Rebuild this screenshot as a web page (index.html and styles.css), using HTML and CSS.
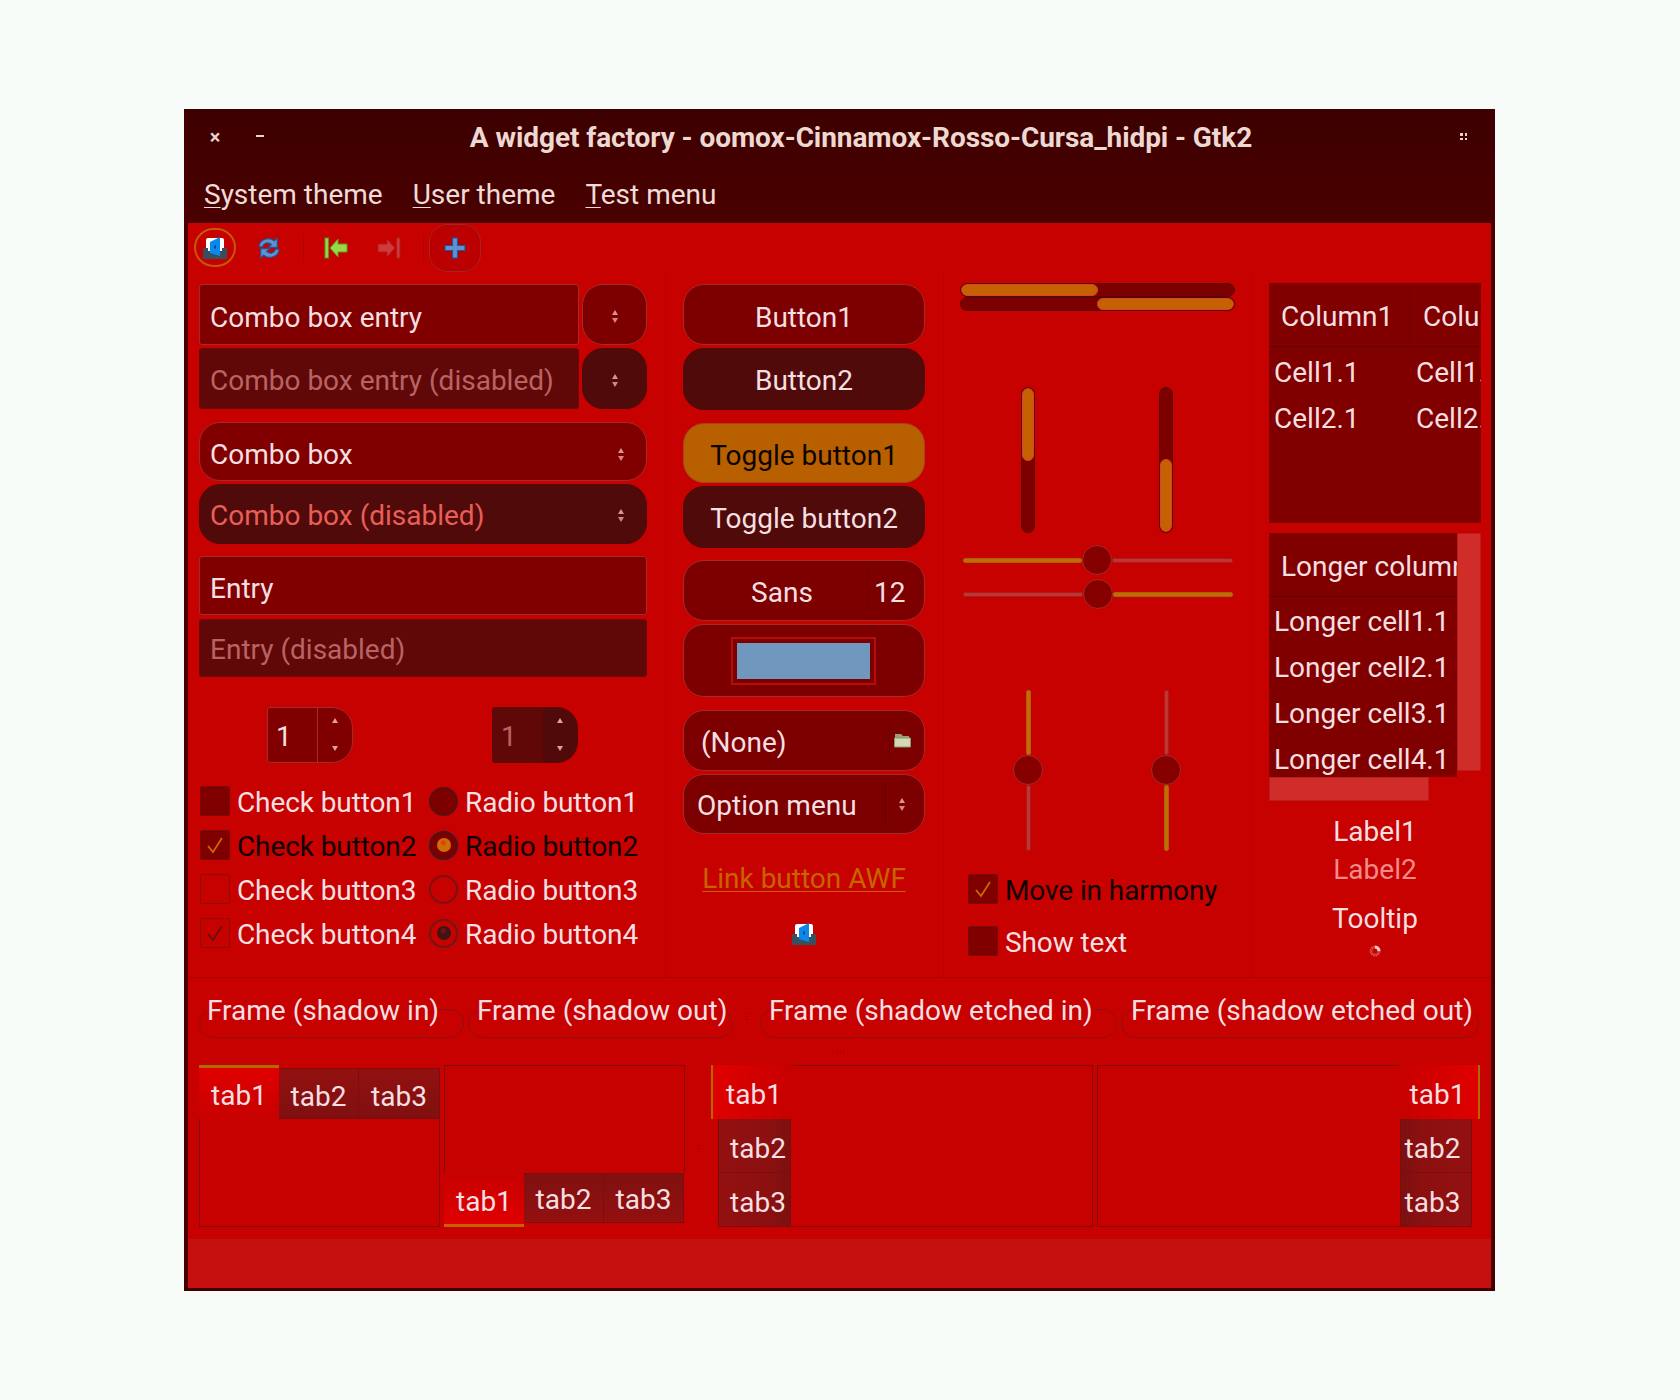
FILE: index.html
```html
<!DOCTYPE html>
<html lang="en">
  <head>
    <meta charset="UTF-8" />
    <title>A widget factory</title>
    <link rel="stylesheet" href="styles.css">
  </head>
  <body>
    <div class="window">
      <div class="titlebar">
        <div class="title-left">
          <span class="wm-close">×</span>
          <span class="wm-min"></span>
        </div>
        <div class="title-text">A widget factory - oomox-Cinnamox-Rosso-Cursa_hidpi - Gtk2</div>
        <div class="title-right"><span class="wm-max"></span></div>
      </div>
      <div class="menubar">
        <span><u>S</u>ystem theme</span>
        <span><u>U</u>ser theme</span>
        <span><u>T</u>est menu</span>
      </div>

      <div class="content">
        <div class="toolbar">
          <div class="tool tool-focus">
            <svg width="24" height="24" viewBox="0 0 24 24">
              <rect x="3" y="2" width="18" height="13" rx="2" fill="#fff" />
              <path d="M0 12h5v3h14v-3h5v10a1 1 0 0 1-1 1H1a1 1 0 0 1-1-1z" fill="#37505f" />
              <path d="M7 6l10-5v19l-10-3z" fill="#0b88ec" />
              <path d="M11 10l2-1v4l-2-1z" fill="#0a4f96" />
            </svg>
          </div>
          <div class="tool tool-refresh">
            <svg width="26" height="26" viewBox="0 0 22 22">
              <path d="M2.500 10C3 3.500 11 1 15.500 5L18 2.500V10.500H10.500L13 8C10 5.500 6.500 6.500 5.500 10z" fill="#5b93d6" stroke="#23558f" stroke-width="1" />
              <path d="M19.500 12C19 18.500 11 21 6.500 17L4 19.500V11.500H11.500L9 14C12 16.500 15.500 15.500 16.500 12z" fill="#5b93d6" stroke="#23558f" stroke-width="1" />
            </svg>
          </div>
          <div class="tool-sep"></div>
          <div class="tool tool-first">
            <svg width="24" height="22" viewBox="0 0 24 22">
              <rect x="1" y="1" width="3.400" height="20" fill="#9ad64c" stroke="#5c9c12" />
              <path d="M6 11l8-9v5h9v8h-9v5z" fill="#9ad64c" stroke="#5c9c12" />
            </svg>
          </div>
          <div class="tool tool-last">
            <svg width="24" height="22" viewBox="0 0 24 22">
              <rect x="19.600" y="1" width="3.400" height="20" fill="#cf3a3a" stroke="#ae1c1c" />
              <path d="M18 11l-8-9v5H1v8h9v5z" fill="#cf3a3a" stroke="#ae1c1c" />
            </svg>
          </div>
          <div class="tool-sep tool-sep-2"></div>
          <div class="tool tool-add">
            <svg width="22" height="22" viewBox="0 0 22 22">
              <path d="M8.500 1h5v7.500h7.500v5h-7.500v7.500h-5v-7.500H1v-5h7.500z" fill="#5b93d6" stroke="#23558f" stroke-width="1.200" />
            </svg>
          </div>
        </div>

        <div class="columns">
          <div class="col col-1">
            <div class="combo-entry">
              <div class="entry grow">Combo box entry</div>
              <div class="pill-btn"><span class="updown"></span></div>
            </div>
            <div class="combo-entry mt3">
              <div class="entry entry-off grow">Combo box entry (disabled)</div>
              <div class="pill-btn pill-off"><span class="updown"></span></div>
            </div>
            <div class="combo mt13">Combo box<span class="updown"></span></div>
            <div class="combo combo-off mt3">Combo box (disabled)<span class="updown"></span></div>
            <div class="entry entry-59 mt12">Entry</div>
            <div class="entry entry-off entry-58 mt4">Entry (disabled)</div>

            <div class="spins">
              <div class="spin">
                <div class="spin-val">1</div>
                <div class="spin-btns"><span class="tri-up"></span><span class="tri-down"></span></div>
              </div>
              <div class="spin spin-off">
                <div class="spin-val">1</div>
                <div class="spin-btns"><span class="tri-up"></span><span class="tri-down"></span></div>
              </div>
            </div>

            <div class="checks">
              <div class="check-row">
                <span class="box box-fill"></span><span class="lbl">Check button1</span>
              </div>
              <div class="radio-row">
                <span class="radio radio-fill"></span><span class="lbl">Radio button1</span>
              </div>
              <div class="check-row">
                <span class="box box-fill">
                  <svg width="28" height="28" viewBox="0 0 28 28"><path d="M7 15l5 6 9-14" fill="none" stroke="#c8680a" stroke-width="1.800" /></svg>
                </span><span class="lbl lbl-dark">Check button2</span>
              </div>
              <div class="radio-row">
                <span class="radio radio-fill radio-on"><i class="dot-orange"></i></span><span class="lbl lbl-dark">Radio button2</span>
              </div>
              <div class="check-row">
                <span class="box"></span><span class="lbl">Check button3</span>
              </div>
              <div class="radio-row">
                <span class="radio"></span><span class="lbl">Radio button3</span>
              </div>
              <div class="check-row">
                <span class="box">
                  <svg width="28" height="28" viewBox="0 0 28 28"><path d="M7 15l5 6 9-14" fill="none" stroke="#5a1414" stroke-width="1.800" /></svg>
                </span><span class="lbl">Check button4</span>
              </div>
              <div class="radio-row">
                <span class="radio radio-on"><i class="dot-dark"></i></span><span class="lbl">Radio button4</span>
              </div>
            </div>
          </div>

          <div class="col col-2">
            <div class="btn h61">Button1</div>
            <div class="btn btn-off h62 mt3">Button2</div>
            <div class="btn btn-toggled h60 mt13">Toggle button1</div>
            <div class="btn btn-off h62 mt3">Toggle button2</div>
            <div class="btn btn-font h61 mt12">
              <span class="font-name">Sans</span><span class="font-size">12</span>
            </div>
            <div class="btn btn-color mt3"><span class="swatch"><i></i></span></div>
            <div class="btn btn-file h61 mt13">
              <span class="file-name">(None)</span>
              <span class="file-icon">
                <svg width="17" height="15" viewBox="0 0 17 15">
                  <path d="M1 1h6l2 2h6v2H1z" fill="#9aa078" />
                  <path d="M.5 5h16v9H.5z" fill="#d4d8b4" stroke="#8d9270" />
                </svg>
              </span>
            </div>
            <div class="btn btn-option h60 mt3">
              <span class="option-name">Option menu</span>
              <span class="option-arrow"><span class="updown"></span></span>
            </div>
            <div class="link-btn">Link button AWF</div>
            <div class="mini-icon">
              <svg width="24" height="24" viewBox="0 0 24 24">
                <rect x="3" y="2" width="18" height="13" rx="2" fill="#fff" />
                <path d="M0 12h5v3h14v-3h5v10a1 1 0 0 1-1 1H1a1 1 0 0 1-1-1z" fill="#37505f" />
                <path d="M7 6l10-5v19l-10-3z" fill="#0b88ec" />
                <path d="M11 10l2-1v4l-2-1z" fill="#0a4f96" />
              </svg>
            </div>
          </div>

          <div class="col col-3">
            <div class="hbar"><div class="hfill"></div></div>
            <div class="hbar hbar-end"><div class="hfill"></div></div>
            <div class="vbars">
              <div class="vbar"><div class="vfill"></div></div>
              <div class="vbar vbar-end"><div class="vfill"></div></div>
            </div>
            <div class="hscale">
              <span class="track track-on w119"></span><span class="thumb"></span><span class="track grow"></span>
            </div>
            <div class="hscale mt4">
              <span class="track w120"></span><span class="thumb"></span><span class="track track-on grow"></span>
            </div>
            <div class="vscales">
              <div class="vscale">
                <span class="track track-on h65"></span><span class="thumb"></span><span class="track grow"></span>
              </div>
              <div class="vscale">
                <span class="track h65"></span><span class="thumb"></span><span class="track track-on grow"></span>
              </div>
            </div>
            <div class="harmony">
              <div class="check-row">
                <span class="box box-fill">
                  <svg width="28" height="28" viewBox="0 0 28 28"><path d="M7 15l5 6 9-14" fill="none" stroke="#c8680a" stroke-width="1.800" /></svg>
                </span><span class="lbl lbl-dark">Move in harmony</span>
              </div>
              <div class="check-row">
                <span class="box box-fill"></span><span class="lbl">Show text</span>
              </div>
            </div>
          </div>

          <div class="col col-4">
            <div class="tree tree-1">
              <div class="tree-head">
                <span class="head-cell head-first">Column1</span>
                <span class="head-cell head-second">Column2</span>
              </div>
              <div class="tree-row"><span>Cell1.1</span><span>Cell1.2</span></div>
              <div class="tree-row"><span>Cell2.1</span><span>Cell2.2</span></div>
            </div>
            <div class="scrolled">
              <div class="tree tree-2">
                <div class="tree-head"><span class="head-cell">Longer column1</span></div>
                <div class="tree-row"><span>Longer cell1.1</span></div>
                <div class="tree-row"><span>Longer cell2.1</span></div>
                <div class="tree-row"><span>Longer cell3.1</span></div>
                <div class="tree-row"><span>Longer cell4.1</span></div>
              </div>
              <div class="vscroll"></div>
            </div>
            <div class="hscroll"></div>
            <div class="labels">
              <div class="label-1">Label1</div>
              <div class="label-2">Label2</div>
              <div class="label-tip">Tooltip</div>
              <svg class="spinner" width="12" height="12" viewBox="0 0 12 12">
                <circle cx="6" cy="6" r="4" fill="none" stroke="#d85050" stroke-width="3" stroke-dasharray="1.500 .6" />
                <path d="M6 2a4 4 0 0 1 4 4" fill="none" stroke="#f4c8c8" stroke-width="3" />
              </svg>
            </div>
          </div>
        </div>

        <div class="frames">
          <fieldset class="frame w265"><legend class="legend-first">Frame (shadow in)</legend></fieldset>
          <fieldset class="frame w265 ml4"><legend>Frame (shadow out)</legend></fieldset>
          <span class="grip"></span>
          <fieldset class="frame w357"><legend>Frame (shadow etched in)</legend></fieldset>
          <fieldset class="frame w358 ml4"><legend class="legend-last">Frame (shadow etched out)</legend></fieldset>
        </div>
        <div class="hgrip"><span></span></div>

        <div class="notebooks">
          <div class="nb nb-top">
            <div class="nb-tabs">
              <div class="tab tab-active">tab1</div>
              <div class="tab">tab2</div>
              <div class="tab tab-last">tab3</div>
            </div>
            <div class="nb-page"></div>
          </div>
          <div class="nb nb-bottom">
            <div class="nb-page"></div>
            <div class="nb-tabs">
              <div class="tab tab-active">tab1</div>
              <div class="tab">tab2</div>
              <div class="tab tab-last">tab3</div>
            </div>
          </div>
          <span class="grip grip-nb"></span>
          <div class="nb nb-left">
            <div class="nb-tabs">
              <div class="tab tab-active">tab1</div>
              <div class="tab">tab2</div>
              <div class="tab tab-last">tab3</div>
            </div>
            <div class="nb-page"></div>
          </div>
          <div class="nb nb-right">
            <div class="nb-page"></div>
            <div class="nb-tabs">
              <div class="tab tab-active">tab1</div>
              <div class="tab">tab2</div>
              <div class="tab tab-last">tab3</div>
            </div>
          </div>
        </div>

        <div class="statusbar"></div>
      </div>
    </div>
  </body>
</html>
```

FILE: styles.css
```css
* {
  box-sizing: border-box;
  margin: 0;
  padding: 0;
}

body {
  background: #f8fcf9;
  height: 1400px;
  padding: 109px 0 0 184px;
  font-family: "Roboto", sans-serif;
  font-size: 28px;
  color: #f6dfe0;
}

.window {
  width: 1311px;
  height: 1182px;
  background: linear-gradient(#3d0000, #4a0000 114px, #4a0000 1160px, #3f0000);
  display: flex;
  flex-direction: column;
}

/* title + menu */
.titlebar {
  height: 56px;
  display: flex;
  align-items: center;
  flex-shrink: 0;
}

.title-left {
  width: 100px;
  display: flex;
  align-items: center;
  padding-left: 25px;
  gap: 35px;
}

.wm-close {
  width: 12px;
  font-size: 20px;
  font-weight: 700;
  line-height: 20px;
  text-align: center;
  color: #e8d2cc;
}

.wm-min {
  width: 8px;
  height: 2px;
  margin-bottom: 2px;
  background: #e8d2cc;
}

.title-text {
  flex: 1;
  text-align: center;
  font-weight: 700;
  letter-spacing: -0.08px;
  color: #eed9d2;
}

.title-right {
  width: 57px;
  padding: 0 0 2px 21px;
}

.wm-max {
  display: block;
  width: 8px;
  height: 8px;
  background: radial-gradient(circle, #e8d2cc 1.600px, transparent 1.700px) 0 0 / 5px 5px;
}

.menubar {
  height: 58px;
  flex-shrink: 0;
  display: flex;
  align-items: center;
  gap: 30px;
  padding-left: 20px;
  color: #efdcd8;
}

.menubar u {
  text-underline-offset: 3px;
  text-decoration-thickness: 1px;
}

.content {
  flex: 1;
  margin: 0 4px 3px;
  background: #c70000;
  display: flex;
  flex-direction: column;
}

/* toolbar */
.toolbar {
  height: 49px;
  display: flex;
  align-items: center;
  flex-shrink: 0;
}

.tool {
  display: flex;
  align-items: center;
  justify-content: center;
}

.tool-focus {
  width: 42px;
  height: 39px;
  margin-left: 6px;
  border: 2px solid #c4580c;
  border-radius: 20px;
}

.tool-refresh {
  margin-left: 20px;
  width: 26px;
}

.tool-sep {
  width: 1px;
  height: 30px;
  margin-left: 21px;
  background: #b00000;
}

.tool-first {
  margin-left: 20px;
  width: 24px;
}

.tool-last {
  margin-left: 29px;
  width: 24px;
}

.tool-sep-2 {
  margin-left: 22px;
}

.tool-add {
  width: 52px;
  height: 48px;
  margin-left: 5px;
  background: #ba0000;
  border: 1px solid #a52424;
  border-radius: 18px;
}

/* columns */
.columns {
  height: 706px;
  flex-shrink: 0;
  display: grid;
  grid-template-columns: 478px 278px 309px 238px;
  border-bottom: 1px solid #b00000;
}

.col {
  padding-top: 12px;
  border-right: 1px solid #bb0000;
  min-width: 0;
}

.col-4 {
  border-right: 0;
  padding-top: 11px;
  padding-left: 16px;
}

.col-1 {
  padding-left: 11px;
  padding-right: 18px;
}

.col-2 {
  padding-left: 17px;
  padding-right: 18px;
}

.col-3 {
  padding-top: 11px;
  padding-left: 16px;
}

.grow {
  flex: 1;
}

.mt3 { margin-top: 3px; }
.mt4 { margin-top: 4px; }
.mt12 { margin-top: 12px; }
.mt13 { margin-top: 13px; }

.combo-entry {
  display: flex;
  height: 61px;
  gap: 3px;
}

.entry {
  background: #800000;
  border: 1px solid #a52a2a;
  border-radius: 3px;
  display: flex;
  align-items: center;
  padding: 6px 0 0 10px;
}

.entry-off {
  background: #600808;
  border-color: #6a0a0a;
  color: #b86464;
  padding-top: 3px;
}

.combo-entry .entry-off {
  padding-top: 4px;
}

.entry-59 { height: 59px; }
.entry-58 { height: 58px; }

.pill-btn {
  width: 65px;
  background: #7c0000;
  border: 1px solid #a52a2a;
  border-radius: 21px;
  display: flex;
  align-items: center;
  justify-content: center;
  padding-top: 4px;
}

.pill-off {
  background: #500a0a;
  border-color: #500a0a;
}

.updown {
  display: block;
  width: 6px;
  height: 15px;
  position: relative;
}

.updown::before,
.updown::after {
  content: "";
  position: absolute;
  left: 0;
  border-left: 3px solid transparent;
  border-right: 3px solid transparent;
}

.updown::before {
  top: 1px;
  border-bottom: 5px solid #dc9292;
}

.updown::after {
  bottom: 1px;
  border-top: 5px solid #d88484;
}

.combo {
  height: 59px;
  background: #800000;
  border: 1px solid #a52a2a;
  border-radius: 21px;
  display: flex;
  align-items: center;
  justify-content: space-between;
  padding: 6px 22px 0 10px;
}

.combo-off {
  height: 60px;
  background: #500a0a;
  border-color: #500a0a;
  color: #e85f58;
  padding-top: 2px;
}

/* spin buttons */
.spins {
  display: flex;
  margin-top: 30px;
  padding-left: 68px;
  gap: 139px;
}

.spin {
  width: 86px;
  height: 56px;
  display: flex;
  background: #800000;
  border: 1px solid #a52a2a;
  border-radius: 3px 21px 21px 3px;
  overflow: hidden;
}

.spin-val {
  width: 50px;
  padding: 4px 0 0 8px;
  line-height: 50px;
  border-right: 1px solid #a52a2a;
}

.spin-btns {
  flex: 1;
  display: flex;
  flex-direction: column;
  justify-content: space-between;
  align-items: center;
  padding: 10px 0 11px;
  margin-right: 1px;
}

.tri-up {
  border-left: 3px solid transparent;
  border-right: 3px solid transparent;
  border-bottom: 5px solid #e0a0a0;
}

.tri-down {
  border-left: 3px solid transparent;
  border-right: 3px solid transparent;
  border-top: 5px solid #e0a0a0;
}

.spin-off {
  background: #600808;
  border-color: #600808;
  color: #b86464;
}

.spin-off .spin-val {
  border-right-color: #600808;
}

.spin-off .spin-btns {
  background: #500a0a;
  margin-right: 0;
}

/* check and radio */
.checks {
  display: grid;
  grid-template-columns: 229px 1fr;
  row-gap: 14px;
  margin-top: 23px;
  padding-left: 1px;
}

.check-row,
.radio-row {
  display: flex;
  align-items: center;
  height: 30px;
  white-space: nowrap;
}

.box {
  width: 30px;
  height: 30px;
  flex-shrink: 0;
  margin-right: 7px;
  border: 1px solid #8a0c0c;
  border-radius: 2px;
  display: flex;
  align-items: center;
  justify-content: center;
}

.box-fill {
  background: #800000;
  border-color: #7a0a0a;
}

.radio {
  width: 29px;
  height: 29px;
  flex-shrink: 0;
  margin-right: 7px;
  border: 2px solid #7a1212;
  border-radius: 50%;
  display: flex;
  align-items: center;
  justify-content: center;
}

.radio-fill {
  background: #7c0000;
  border-color: #571010;
}

.radio-on {
  box-shadow: 0 0 0 1px #a51010;
}

.dot-orange {
  width: 14px;
  height: 14px;
  border-radius: 50%;
  background: radial-gradient(circle at 45% 35%, #e04010 2px, #cc7006 3px);
}

.dot-dark {
  width: 14px;
  height: 14px;
  border-radius: 50%;
  background: radial-gradient(circle at 45% 35%, #7a1010 2px, #3e1414 3px);
}

.lbl {
  padding-top: 2px;
  letter-spacing: -0.1px;
  color: #f6dfe0;
}

.lbl-dark {
  color: #100000;
}

/* middle column */
.btn {
  background: #7c0000;
  border: 1px solid #a52a2a;
  border-radius: 21px;
  display: flex;
  align-items: center;
  justify-content: center;
  padding-top: 6px;
}

.h60 { height: 60px; }
.h61 { height: 61px; }
.h62 { height: 62px; }

.btn-off {
  background: #500a0a;
  border-color: #500a0a;
  padding-top: 2px;
}

.btn-toggled {
  background: #b85f00;
  border-color: #a84028;
  color: #0e0500;
  padding-top: 4px;
}

.btn-font {
  justify-content: flex-start;
  padding-top: 0;
}

.font-name {
  width: 185px;
  padding: 4px 0 0 12px;
  text-align: center;
  line-height: 36px;
  border-right: 1px solid #6e0000;
}

.font-size {
  flex: 1;
  padding: 4px 0 0 5px;
}

.btn-color {
  height: 73px;
  padding-top: 0;
}

.swatch {
  width: 145px;
  height: 48px;
  margin-right: 2px;
  border: 2px solid #b50d0d;
  padding: 4px;
}

.swatch i {
  display: block;
  height: 100%;
  background: #7097bd;
}

.btn-file,
.btn-option {
  justify-content: flex-start;
  padding-top: 0;
}

.file-name {
  width: 206px;
  padding: 4px 0 0 17px;
  line-height: 36px;
  border-right: 1px solid #6e0000;
}

.file-icon {
  padding-left: 4px;
  display: flex;
}

.option-name {
  width: 202px;
  padding: 4px 0 0 13px;
  line-height: 36px;
  border-right: 1px solid #5e0000;
}

.option-arrow {
  padding-left: 13px;
}

.link-btn {
  margin-top: 28px;
  height: 34px;
  line-height: 34px;
  text-align: center;
  color: #c86400;
  text-decoration: underline;
  text-decoration-thickness: 1px;
  text-underline-offset: 3px;
}

.mini-icon {
  margin-top: 26px;
  height: 24px;
  display: flex;
  justify-content: center;
}

/* progress + scales */
.hbar {
  width: 275px;
  height: 14px;
  background: #7c0000;
  border: 1px solid #5a0606;
  border-radius: 7px;
  overflow: hidden;
}

.hfill {
  width: 137px;
  height: 100%;
  background: #c56100;
  border: 1px solid #d8452a;
  border-radius: 6px;
}

.hbar-end {
  display: flex;
  justify-content: flex-end;
}

.vbars {
  display: flex;
  gap: 124px;
  margin-top: 76px;
  padding-left: 61px;
}

.vbar {
  width: 14px;
  height: 146px;
  background: #7c0000;
  border: 1px solid #5a0606;
  border-radius: 7px;
  overflow: hidden;
  display: flex;
  flex-direction: column;
}

.vfill {
  height: 73px;
  background: #c56100;
  border: 1px solid #d8452a;
  border-radius: 6px;
}

.vbar-end {
  justify-content: flex-end;
}

.hscale {
  width: 270px;
  margin-left: 3px;
  display: flex;
  align-items: center;
  height: 30px;
}

.vbars + .hscale {
  margin-top: 12px;
}

.track {
  display: block;
  background: #cb3030;
  border: 1px solid #9a2424;
  border-radius: 2px;
  height: 5px;
}

.track-on {
  background: #c46c00;
  border-color: #a66010;
}

.w119 { width: 119px; }
.w120 { width: 120px; }

.thumb {
  width: 30px;
  height: 30px;
  flex-shrink: 0;
  border-radius: 50%;
  background: #860000;
  border: 1px solid #a52a2a;
}

.vscales {
  display: flex;
  gap: 108px;
  margin-top: 81px;
  padding-left: 53px;
}

.vscale {
  width: 30px;
  height: 161px;
  display: flex;
  flex-direction: column;
  align-items: center;
}

.vscale .track {
  width: 5px;
  height: auto;
}

.vscale .h65 {
  height: 65px;
  flex-shrink: 0;
}

.harmony {
  margin-top: 23px;
  padding-left: 8px;
  display: flex;
  flex-direction: column;
  gap: 22px;
}

/* trees */
.tree {
  background: #800000;
  overflow: hidden;
  white-space: nowrap;
}

.tree-1 {
  width: 212px;
  height: 240px;
}

.tree-2 {
  width: 188px;
  height: 244px;
}

.tree-head {
  height: 64px;
  display: flex;
  align-items: center;
  padding-top: 4px;
  border-bottom: 1px solid #5e0000;
}

.head-cell {
  padding-left: 12px;
  flex-shrink: 0;
}

.head-first {
  width: 141px;
  line-height: 52px;
  border-right: 1px solid #720000;
}

.head-second {
  padding-left: 13px;
}

.tree-row {
  height: 46px;
  display: flex;
  align-items: center;
  padding: 4px 0 0 5px;
}

.tree-row span {
  width: 142px;
  flex-shrink: 0;
}

.tree-2 .tree-head {
  margin-bottom: 1px;
}

.tree-2 .tree-row {
  padding-top: 0;
}

.scrolled {
  display: flex;
  align-items: flex-start;
  margin-top: 10px;
}

.vscroll {
  width: 24px;
  height: 238px;
  background: #cf2c2a;
  border: 1px solid #b42020;
}

.hscroll {
  width: 160px;
  height: 24px;
  background: #cf2c2a;
  border: 1px solid #b42020;
}

.labels {
  width: 212px;
  margin-top: 12px;
  text-align: center;
}

.label-1,
.label-2 {
  height: 38px;
  line-height: 38px;
}

.label-2 {
  color: #f48a8a;
}

.label-tip {
  height: 38px;
  line-height: 38px;
  margin-top: 11px;
}

.spinner {
  display: block;
  margin: 7px auto 0;
}

/* frames */
.frames {
  height: 61px;
  flex-shrink: 0;
  display: flex;
  padding-left: 11px;
  margin-top: 12px;
}

.frame {
  height: 48px;
  border: 1px solid #8e1010;
  border-radius: 15px;
  min-width: 0;
}

.frame legend {
  margin-left: 8px;
  padding-top: 4px;
  line-height: 34px;
  white-space: nowrap;
}

.frame .legend-first {
  margin-left: 7px;
}

.frame .legend-last {
  margin-left: 9px;
}

.w265 { width: 265px; }
.w357 { width: 357px; }
.w358 { width: 358px; }
.ml4 { margin-left: 4px; }

.grip {
  width: 27px;
  flex-shrink: 0;
  position: relative;
}

.grip-nb {
  width: 26px;
}

.grip::before {
  content: "";
  position: absolute;
  left: 12px;
  top: 23px;
  width: 3px;
  height: 7px;
  background: repeating-linear-gradient(#a80000 0 1px, transparent 1px 3px);
}

.grip-nb::before {
  top: 80px;
}

.hgrip {
  height: 14px;
  flex-shrink: 0;
  padding-left: 649px;
}

.hgrip span {
  display: block;
  width: 7px;
  height: 3px;
  background: repeating-linear-gradient(90deg, #a80000 0 1px, transparent 1px 3px);
}

/* notebooks */
.notebooks {
  height: 162px;
  flex-shrink: 0;
  display: flex;
  padding-left: 11px;
}

.nb {
  display: flex;
  flex-shrink: 0;
}

.nb-top,
.nb-bottom {
  flex-direction: column;
  width: 241px;
}

.nb-bottom {
  margin-left: 4px;
}

.nb-left {
  width: 382px;
}

.nb-right {
  width: 383px;
  margin-left: 4px;
}

.nb-page {
  flex: 1;
  border: 1px solid #7e0c0c;
}

.nb-tabs {
  display: flex;
  flex-shrink: 0;
}

.tab {
  display: flex;
  align-items: center;
  justify-content: center;
  border: 1px solid #7e0c0c;
  border-left: 0;
}

.nb-top .nb-tabs,
.nb-bottom .nb-tabs {
  height: 54px;
}

.nb-top .tab,
.nb-bottom .tab {
  width: 80px;
}

.nb-top .tab-last {
  width: 81px;
}

.nb-top .nb-tabs {
  align-items: flex-end;
}

.nb-top .nb-page {
  border-top: 0;
}

.nb-bottom .nb-page {
  border-bottom: 0;
}

.nb-top .tab {
  height: 51px;
  background: linear-gradient(#931010, #801010);
  padding-top: 6px;
}

.nb-top .tab-active {
  height: 54px;
  background: linear-gradient(#e00000, #c70000);
  border: 0;
  border-top: 3px solid #b06a00;
  padding-top: 4px;
}

.nb-bottom .tab {
  height: 50px;
  background: linear-gradient(#801010, #931010);
  padding-top: 3px;
}

.nb-bottom .tab-active {
  height: 54px;
  background: linear-gradient(#c70000, #e00000);
  border: 0;
  border-bottom: 3px solid #c46400;
  padding-top: 6px;
}

.nb-left .nb-tabs,
.nb-right .nb-tabs {
  flex-direction: column;
  width: 80px;
}

.nb-left .tab,
.nb-right .tab {
  height: 54px;
  border: 1px solid #7e0c0c;
  border-top: 0;
  padding-top: 6px;
}

.nb-left .tab {
  margin-left: 7px;
  background: linear-gradient(90deg, #931010, #8c1010 70%, #7c1010);
  padding-left: 7px;
}

.nb-left .tab-active {
  margin-left: 0;
  background: linear-gradient(90deg, #e00000, #c70000);
  border: 0;
  border-left: 2px solid #b06a00;
  padding-left: 4px;
  padding-top: 5px;
}

.nb-left .nb-page {
  border-left: 0;
}

.nb-right .tab {
  width: 72px;
  background: linear-gradient(90deg, #7c1010, #8c1010 30%, #931010);
  padding-right: 7px;
}

.nb-right .tab-active {
  width: 80px;
  background: linear-gradient(90deg, #c70000, #e00000);
  border: 0;
  border-right: 2px solid #b06a00;
  padding-right: 3px;
  padding-top: 5px;
}

.nb-right .nb-page {
  border-right: 0;
}

.statusbar {
  flex: 1;
  margin-top: 11px;
  background: #c6100f;
  border-top: 1px solid #b30b0b;
}
```
